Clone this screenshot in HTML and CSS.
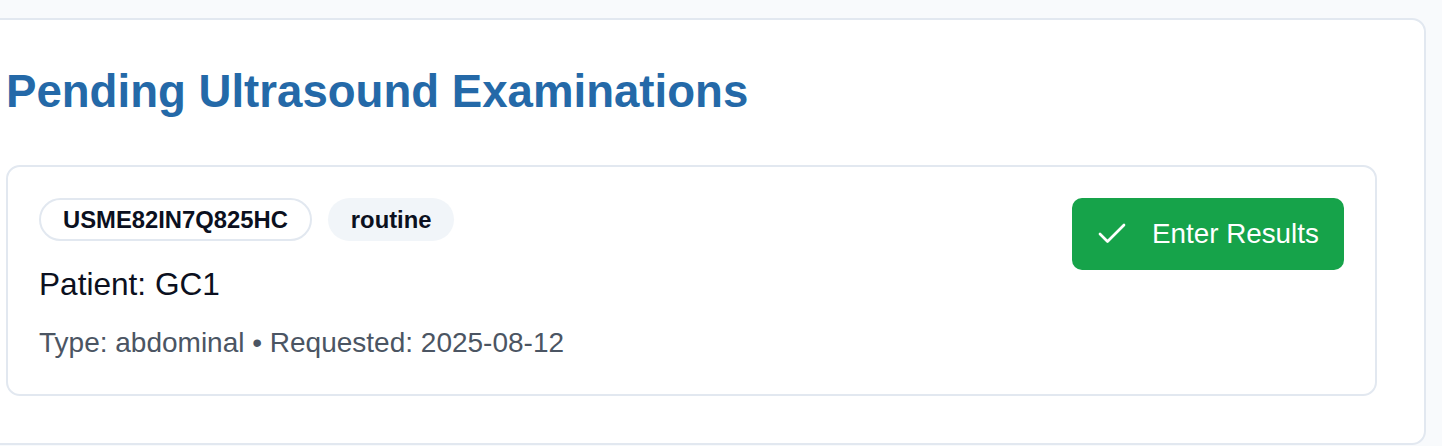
FILE: index.html
```html
<!DOCTYPE html>
<html lang="en">
<head>
<meta charset="utf-8">
<title>Pending Ultrasound Examinations</title>
<link rel="stylesheet" href="styles.css">
</head>
<body>
<main class="page">
  <section class="panel">
    <h1 class="panel-title">Pending Ultrasound Examinations</h1>
    <div class="exam-card">
      <div class="exam-info">
        <div class="badges">
          <span class="badge badge-outline">USME82IN7Q825HC</span>
          <span class="badge badge-muted">routine</span>
        </div>
        <p class="patient">Patient: GC1</p>
        <p class="meta">Type: abdominal • Requested: 2025-08-12</p>
      </div>
      <button class="btn-enter" type="button">
        <svg class="btn-icon" viewBox="0 0 24 24" width="36" height="36" fill="none" stroke="currentColor" stroke-width="1.8" stroke-linecap="round" stroke-linejoin="round"><path d="M20 6 9 17l-5-5"/></svg>
        <span>Enter Results</span>
      </button>
    </div>
  </section>
</main>
</body>
</html>
```

FILE: styles.css
```css
* { box-sizing: border-box; }

html, body {
  margin: 0;
  padding: 0;
  background: #f8fafc;
  font-family: "Liberation Sans", Arial, sans-serif;
  overflow: hidden;
}

.page {
  padding-top: 18px;
}

.panel {
  margin-left: -43px;
  width: 1469px;
  height: 427px;
  background: #ffffff;
  border: 2px solid #e2e8f0;
  border-radius: 14px;
  padding: 45px 47px 0 47px;
}

.panel-title {
  margin: 0 0 46px 0;
  font-size: 45.6px;
  line-height: 54px;
  font-weight: 700;
  color: #2469a8;
}

.exam-card {
  display: flex;
  justify-content: space-between;
  align-items: flex-start;
  border: 2px solid #e2e8f0;
  border-radius: 14px;
  padding: 31px;
  height: 231px;
}

.badges {
  display: flex;
  gap: 16px;
}

.badge {
  display: inline-flex;
  align-items: center;
  height: 43px;
  padding: 0 23px;
  border-radius: 999px;
  font-size: 23.8px;
  font-weight: 700;
  color: #0b1020;
}

.badge-outline {
  background: #ffffff;
  border: 2px solid #e2e8f0;
  padding: 0 22px;
}

.badge-muted {
  background: #f1f5f9;
}

.patient {
  margin: 23px 0 0 0;
  font-size: 31.6px;
  line-height: 40px;
  color: #0b1020;
}

.meta {
  margin: 21px 0 0 0;
  font-size: 28px;
  line-height: 36px;
  color: #4b5563;
}

.btn-enter {
  display: inline-flex;
  align-items: center;
  gap: 22px;
  height: 72px;
  width: 272px;
  padding: 0 22px;
  border: none;
  border-radius: 10px;
  background: #16a34a;
  color: #ffffff;
  font-family: "Liberation Sans", Arial, sans-serif;
  font-size: 27.8px;
}

.btn-icon {
  flex: none;
}
```
